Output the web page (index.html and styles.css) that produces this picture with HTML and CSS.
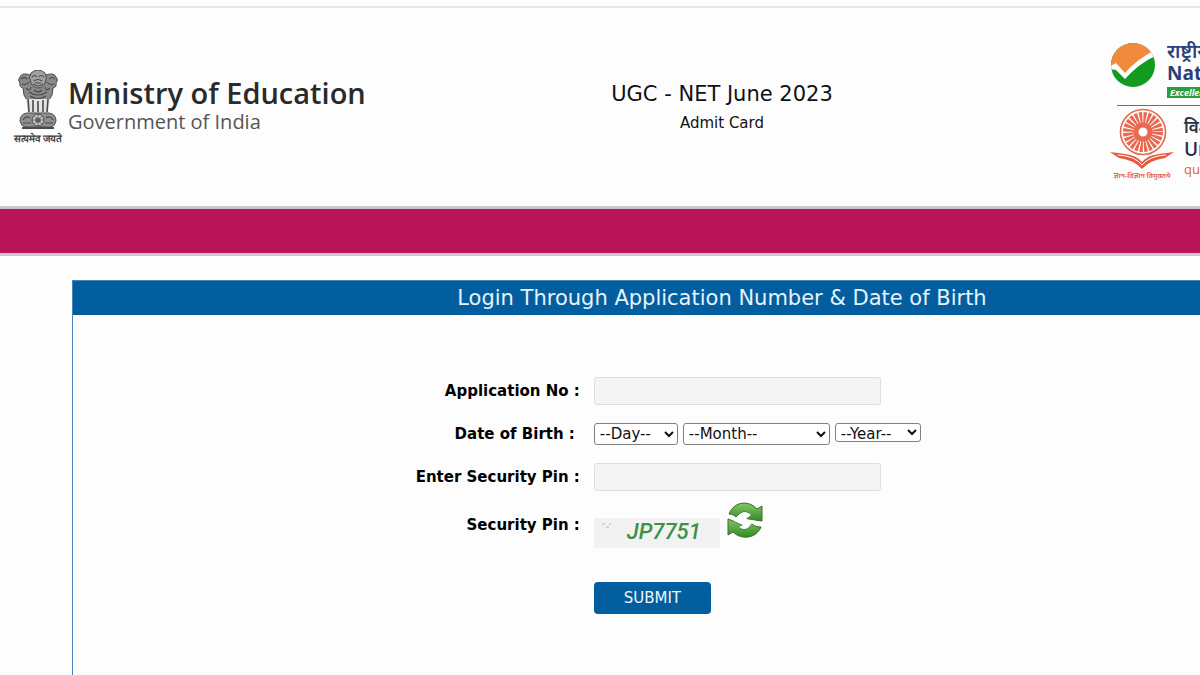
FILE: index.html
```html
<!DOCTYPE html>
<html lang="en">
<head>
<meta charset="utf-8">
<title>UGC - NET June 2023 Admit Card</title>
<link rel="stylesheet" href="styles.css">
</head>
<body>
<div class="page">
  <div class="topline"></div>
  <header class="header">
    <div class="ministry">
      <div class="emblem">
        <svg class="emblem-art" viewBox="0 0 40 60" width="40" height="60" aria-hidden="true">
          <g fill="#8a8a8a" stroke="#4c4c4c" stroke-width="1">
            <path d="M12 5 Q4 2 2 7 Q-1 10 2 13 Q1 17 5 18 Q5 26 9 30 L31 30 Q35 26 35 18 Q39 17 38 13 Q41 10 38 7 Q36 2 28 5Z"/>
            <path d="M13 3 Q20 -3 27 3 Q30 8 27 13 Q25 18 20 18 Q15 18 13 13 Q10 8 13 3Z" fill="#a0a0a0"/>
            <path d="M8 29 H32 L30 44 H10Z" fill="#e4e4e4" stroke="none"/>
            <path d="M9 43 H31 Q38 44 38 51 Q37 56 33 57 H7 Q3 56 2 51 Q2 44 9 43Z" fill="#909090"/>
            <circle cx="20" cy="50" r="6" fill="#c2c2c2"/>
          </g>
          <g fill="none" stroke="#4a4a4a" stroke-width="1.2">
            <path d="M14 7 Q17 4 19 7 M21 7 Q23 4 26 7 M16 11 Q20 8 24 11 M15 14 Q20 18 25 14 M17 13 H23"/>
            <path d="M3 9 Q6 6 9 9 M31 9 Q34 6 37 9 M4 14 Q8 16 11 12 M36 14 Q32 16 29 12"/>
            <path d="M8 18 Q12 22 13 17 M32 18 Q28 22 27 17 M11 22 Q20 28 29 22 M12 26 Q20 31 28 26 M16 20 Q20 24 24 20"/>
            <path d="M10 29 L11 42 M15 30 V42 M20 31 V42 M25 30 V42 M30 29 L29 42" stroke-width="1.6"/>
            <path d="M5 50 Q8 45 12 48 M5 53 H13 M28 48 Q32 45 35 50 M27 53 H35"/>
            <circle cx="20" cy="50" r="2"/>
            <path d="M20 44 V56 M14 50 H26 M16 46 L24 54 M24 46 L16 54" stroke-width=".6"/>
            <path d="M4 58 H36" stroke-width="2"/>
          </g>
        </svg>
        <span class="motto" lang="hi">सत्यमेव जयते</span>
      </div>
      <div class="ministry-text">
        <div class="ministry-name">Ministry of Education</div>
        <div class="ministry-gov">Government of India</div>
      </div>
    </div>
    <div class="titles">
      <h1 class="title">UGC - NET June 2023</h1>
      <p class="subtitle">Admit Card</p>
    </div>
    <div class="agencies">
      <div class="agency nta">
        <svg width="44" height="46" viewBox="0 0 44 46" aria-hidden="true">
          <defs><clipPath id="disc"><circle cx="22" cy="23" r="22"/></clipPath></defs>
          <g clip-path="url(#disc)">
            <rect width="44" height="46" fill="#129b1f"/>
            <path d="M-2 -2 H46 V10 Q27 20 14 34 L5 22 L-2 25Z" fill="#f08a3c"/>
            <path d="M-2 25 L5 21 L14 31 Q26 17 46 7 V13 Q28 21 14 37 L5 28 L-2 27Z" fill="#fff"/>
          </g>
        </svg>
        <div class="nta-text">
          <div class="nta-hindi" lang="hi">राष्ट्रीय परीक्षा एजेंसी</div>
          <div class="nta-name">National Testing Agency</div>
          <div class="nta-tag">Excellence in Assessment</div>
        </div>
      </div>
      <div class="agency ugc">
        <div class="ugc-mark">
          <svg width="64" height="62" viewBox="0 0 64 62" aria-hidden="true">
            <circle cx="33" cy="24" r="22.5" fill="none" stroke="#e8694f" stroke-width="1.6"/>
            <circle cx="33" cy="24" r="13" fill="none" stroke="#e8694f" stroke-width="14" stroke-dasharray="2.4 1.003"/>
            <circle cx="33" cy="24" r="7" fill="none" stroke="#e8694f" stroke-width="5"/>
            <circle cx="33" cy="24" r="3" fill="#fff"/>
            <path d="M0 44 L15 46 Q26 47 32 54 Q38 47 49 46 L64 44 L55 50 Q40 52 32 61 Q24 52 9 50Z" fill="#e5593c"/>
            <path d="M8 47 Q25 48 32 57 Q39 48 56 47" fill="none" stroke="#fff" stroke-width="1"/>
          </svg>
          <span class="ugc-motto" lang="hi">ज्ञान-विज्ञान विमुक्तये</span>
        </div>
        <div class="ugc-text">
          <div class="ugc-hindi" lang="hi">विश्वविद्यालय अनुदान आयोग</div>
          <div class="ugc-name">University Grants Commission</div>
          <div class="ugc-tag">quality higher education for all</div>
        </div>
      </div>
    </div>
  </header>
  <div class="band"></div>
  <main class="panel">
    <h2 class="panel-title">Login Through Application Number &amp; Date of Birth</h2>
    <form class="form">
      <div class="row">
        <label class="label" for="appno">Application No :</label>
        <input class="field" id="appno" type="text">
      </div>
      <div class="row">
        <label class="label label-date" for="day">Date of Birth :</label>
        <div class="dates">
          <select class="select day" id="day"><option>--Day--</option></select>
          <select class="select month" aria-label="Month"><option>--Month--</option></select>
          <select class="select year" aria-label="Year"><option>--Year--</option></select>
        </div>
      </div>
      <div class="row">
        <label class="label" for="pin">Enter Security Pin :</label>
        <input class="field" id="pin" type="text">
      </div>
      <div class="row row-captcha">
        <span class="label">Security Pin :</span>
        <div class="captcha-group">
          <div class="captcha">
            <svg class="specks" width="14" height="12" viewBox="0 0 14 12" aria-hidden="true"><path d="M2 3h3v2h-3zM6 6h3v2h-3zM9 3h2v2h-2zM5 10h1v1h-1z" fill="#d2d2d2"/></svg>
            <span>JP7751</span>
          </div>
          <button class="refresh" type="button" aria-label="Refresh security pin">
            <svg width="36" height="36" viewBox="0 0 36 36" aria-hidden="true">
              <defs><linearGradient id="leaf" x1="0" y1="0" x2="0" y2="1"><stop offset="0" stop-color="#8ac46a"/><stop offset="1" stop-color="#2f8a22"/></linearGradient></defs>
              <g fill="url(#leaf)" stroke="#2f7429" stroke-width="1">
                <path d="M2 12 C7 -1 22 -2 30 7 L35 4 V19 L19 17 L24 13 C19 8 14 9 9 15 C7 13 5 12 2 12Z"/>
                <path d="M34 25 C29 37 14 38 6 30 L1 33 V17 L16 23 L12 25 C17 29 22 27 24 21 C27 24 30 25 34 25Z"/>
              </g>
              <path d="M10 16 C14 9 20 9 24 13 L19 17 L30 19 L24 22 C21 28 16 28 12 25 L16 23 L7 19Z" fill="#fff"/>
            </svg>
          </button>
        </div>
      </div>
      <div class="row row-submit">
        <button class="submit" type="submit">SUBMIT</button>
      </div>
    </form>
  </main>
</div>
</body>
</html>
```
FILE: styles.css
```css
* { box-sizing: border-box; }
html { overflow: hidden; }
body {
  margin: 0;
  overflow: hidden;
  background: #fdfdfd;
  color: #111;
  font-family: Verdana, "DejaVu Sans", sans-serif;
}
.page {
  width: 120.33%;
  min-height: 100vh;
  display: flex;
  flex-direction: column;
}
.topline { height: 8px; border-bottom: 2px solid #e6e6e6; }
.header {
  display: grid;
  grid-template-columns: 1fr auto 1fr;
  min-height: 198px;
}
.ministry {
  display: flex;
  align-items: flex-start;
  gap: 4px;
  padding: 62px 0 0 12px;
  font-family: "Open Sans", sans-serif;
}
.emblem { display: flex; flex-direction: column; align-items: center; width: 52px; }
.motto { font-size: 10px; line-height: 16px; font-weight: 700; white-space: nowrap; color: #444; }
.ministry-text { padding-top: 6px; }
.ministry-name { font-size: 29px; line-height: 34px; font-weight: 600; color: #2a2a2a; white-space: nowrap; }
.ministry-gov { font-size: 20px; line-height: 24px; color: #555; white-space: nowrap; }
.titles { text-align: center; padding-top: 73px; }
.title { margin: 0; font-size: 21px; line-height: 26px; font-weight: 400; }
.subtitle { margin: 7px 0 0; font-size: 15px; line-height: 18px; }
.agencies {
  justify-self: end;
  width: 334px;
  padding-top: 34px;
  font-family: "Open Sans", "Noto Sans", sans-serif;
  white-space: nowrap;
}
.agency { display: flex; align-items: flex-start; }
.nta { gap: 12px; padding-left: 1px; }
.nta-hindi { font-size: 19px; line-height: 18px; font-weight: 600; color: #2b3f78; }
.nta-name { font-size: 19px; line-height: 27px; font-weight: 700; color: #2b3f78; }
.nta-tag {
  width: 160px;
  padding-left: 3px;
  background: #2a9d3f;
  color: #fff;
  font-size: 9px;
  line-height: 11px;
  font-style: italic;
  font-weight: 700;
}
.ugc { gap: 10px; margin: 7px 0 0 7px; padding-top: 2px; border-top: 1px solid #66706c; }
.ugc-mark { width: 64px; margin-left: -7px; display: flex; flex-direction: column; align-items: center; }
.ugc-motto { font-size: 7px; line-height: 12px; font-weight: 700; color: #e5705a; }
.ugc-text { padding-top: 8px; }
.ugc-hindi { font-size: 17px; line-height: 22px; font-weight: 600; color: #2b3142; }
.ugc-name { font-size: 19px; line-height: 22px; font-weight: 600; color: #2b3142; }
.ugc-tag { font-size: 13px; line-height: 18px; color: #e5593c; }
.band {
  height: 50px;
  background: #ba1357;
  border-top: 3px solid #cfc6cc;
  border-bottom: 3px solid #cfc6cc;
}
.panel {
  flex: 1;
  margin: 24px 5% 0;
  border: 1px solid #4c83b6;
  border-bottom: 0;
}
.panel-title {
  margin: 0;
  background: #035e9f;
  color: #e6f3fb;
  font-size: 21px;
  line-height: 34px;
  font-weight: 400;
  text-align: center;
}
.form { display: flex; flex-direction: column; gap: 18px; padding: 62px 0 60px 1px; }
.row { display: grid; grid-template-columns: 39% 1fr; column-gap: 14px; align-items: center; }
.label { text-align: right; font-family: "DejaVu Sans", sans-serif; font-size: 15px; line-height: 20px; font-weight: 700; color: #000; }
.label-date { padding-right: 5px; }
.field {
  width: 287px;
  height: 28px;
  border: 1px solid #dedede;
  border-radius: 3px;
  background: #f4f4f4;
  font: inherit;
}
.dates { display: flex; align-items: flex-start; gap: 5px; height: 22px; }
.select {
  height: 22px;
  padding: 0 1px;
  border: 1px solid #808080;
  border-radius: 3px;
  background-color: #fff;
  color: #111;
  font-family: Verdana, "DejaVu Sans", sans-serif;
  font-size: 15px;
}
.day { width: 84px; }
.month { width: 147px; }
.year { width: 86px; height: 19px; }
.row-captcha { margin-top: -7px; }
.captcha-group { display: flex; gap: 7px; height: 46px; }
.captcha {
  align-self: flex-end;
  display: flex;
  gap: 13px;
  width: 126px;
  height: 30px;
  padding-left: 6px;
  background: #f2f2f2;
  color: #3a9147;
  font: italic 500 22px/28px Roboto, sans-serif;
}
.specks { margin-top: 2px; }
.refresh { height: 36px; padding: 0; border: 0; background: none; }
.row-submit { margin-top: 16px; }
.submit {
  grid-column: 2;
  justify-self: start;
  width: 117px;
  height: 32px;
  border: 0;
  border-radius: 4px;
  background: #035e9f;
  color: #eef7fd;
  font-family: Verdana, "DejaVu Sans", sans-serif;
  font-size: 15px;
}
```
